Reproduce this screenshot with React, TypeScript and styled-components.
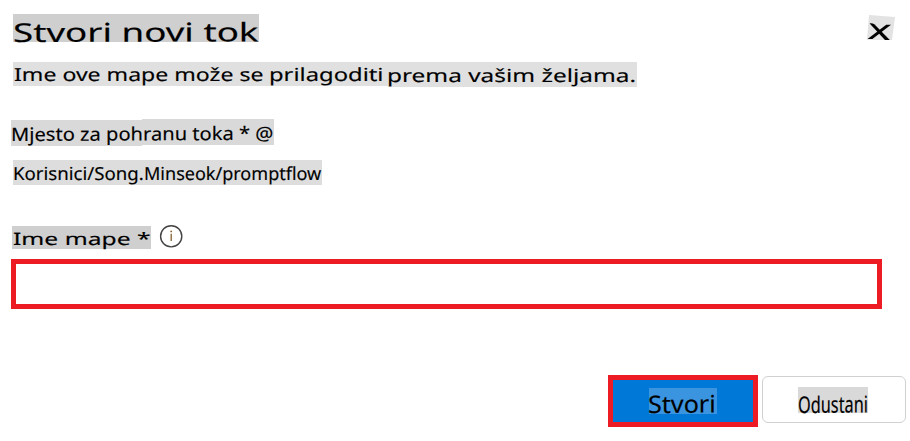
import React, { useLayoutEffect, useRef, useState } from "react";
import styled, { createGlobalStyle } from "styled-components";

const GlobalStyle = createGlobalStyle`
  * { box-sizing: border-box; }
  html, body { margin: 0; padding: 0; background: #fff; }
  body { font-family: "Noto Sans", "Open Sans", sans-serif; color: #000; overflow: hidden; }
`;

const Dialog = styled.main`
  width: 910px;
  height: 441px;
  display: flex;
  flex-direction: column;
  background: #fff;
`;

const Header = styled.header`
  display: flex;
  justify-content: space-between;
  align-items: flex-start;
  height: 62px;
  padding: 14px 15px 0 13px;
`;

const Title = styled.h1`
  margin: 0;
  font-weight: 400;
`;

const CloseButton = styled.button`
  display: block;
  width: 28px;
  height: 26px;
  padding: 0;
  border: 0;
  background: none;
  margin-top: 1px;
`;

const Line = styled.div<{ $left: number; $height: number }>`
  display: flex;
  align-items: flex-start;
  height: ${(p) => p.$height}px;
  padding-left: ${(p) => p.$left}px;
`;

const InfoIcon = styled.svg`
  display: block;
  margin: -2px 0 0 8px;
`;

const NameInput = styled.input`
  display: block;
  width: 871px;
  height: 50px;
  margin-left: 11px;
  border: 5px solid #ed1c24;
  border-radius: 0;
  background: #fff;
  outline: none;
`;

const Footer = styled.footer`
  display: flex;
  justify-content: flex-end;
  gap: 4px;
  margin-top: 66px;
  padding-right: 4px;
`;

const CreateButton = styled.button`
  display: flex;
  width: 150px;
  height: 52px;
  padding: 8px 0 0 36px;
  border: 5px solid #ed1c24;
  border-radius: 0;
  background: #0078d7;
  color: #000;
`;

const CancelButton = styled.button`
  display: flex;
  width: 144px;
  height: 47px;
  margin-top: 1px;
  padding: 10px 0 0 35px;
  border: 1px solid #d0d0d0;
  border-radius: 6px;
  background: #fff;
  color: #000;
`;

type MarkProps = { $w: number; $h: number; $bg: string };

const Mark = styled.span<MarkProps>`
  display: block;
  flex: none;
  width: ${(p) => p.$w}px;
  height: ${(p) => p.$h}px;
  background: ${(p) => p.$bg};
  text-align: left;
`;

const Glyphs = styled.span<{ $size: number; $base: number; $inset: number }>`
  display: block;
  width: max-content;
  margin-left: ${(p) => p.$inset}px;
  font-family: "Noto Sans", "Open Sans", sans-serif;
  font-weight: 400;
  font-size: ${(p) => p.$size}px;
  line-height: ${(p) => 2 * (p.$base - 0.388 * p.$size)}px;
  white-space: nowrap;
  text-rendering: geometricPrecision;
  -webkit-text-stroke: 0.15px #000;
  transform-origin: 0 ${(p) => p.$base}px;
`;

type LabelProps = {
  text: string;
  width: number;
  height: number;
  color: string;
  size: number;
  base: number;
  inset?: number;
  end?: number;
  tilt?: number;
};

/* Highlighted label whose text is stretched to fill its highlight. */
function Label({ text, width, height, color, size, base, inset = 0, end = 0, tilt = 0 }: LabelProps) {
  const ref = useRef<HTMLSpanElement>(null);
  const [scale, setScale] = useState(1);
  useLayoutEffect(() => {
    const el = ref.current;
    if (!el) return;
    const natural = parseFloat(getComputedStyle(el).width);
    if (natural > 0) setScale((width - inset - end) / natural);
  }, [text, width, inset, end, size]);
  return (
    <Mark $w={width} $h={height} $bg={color}>
      <Glyphs
        ref={ref}
        $size={size}
        $base={base}
        $inset={inset}
        style={{ transform: `skewY(${tilt}deg) scaleX(${scale})` }}
      >
        {text}
      </Glyphs>
    </Mark>
  );
}

export default function App() {
  return (
    <>
      <GlobalStyle />
      <Dialog>
        <Header>
          <Title>
            <Label text="Stvori novi tok" width={246} height={28} color="#cfcfcf" size={26} base={28.3} end={0.5} tilt={-0.15} />
          </Title>
          <CloseButton aria-label="Zatvori">
            <svg width="28" height="26" viewBox="0 0 28 26">
              <path d="M2 0 L28 2 L25 25 H0 Z" fill="#e3e3e3" />
              <path d="M2.6 8.2 Q5.5 7.8 7.6 9.6 L22.8 25 H18 L3.8 9.8 Z" fill="#000" />
              <path d="M19.2 9.8 H24 L5.4 24 H0.6 Z" fill="#000" />
            </svg>
          </CloseButton>
        </Header>
        <Line $left={13} $height={57}>
          <Label text="Ime ove mape može se" width={256} height={24} color="#e0e0e0" size={18} base={20} inset={0.5} end={6} />
          <Label text="prilagoditi" width={119} height={24} color="#e0e0e0" size={18} base={20.5} inset={-0.5} end={5} />
          <Label text="prema vašim željama." width={249} height={25} color="#e0e0e0" size={18} base={21} inset={-1} end={1} />
        </Line>
        <Line $left={11} $height={41}>
          <Label
            text="Mjesto za pohranu toka * @"
            width={263}
            height={27}
            color="linear-gradient(#d9d9d9, #d9d9d9) 0 1px / 131px 26px no-repeat, linear-gradient(#d9d9d9, #d9d9d9) 131px 0 / 132px 26px no-repeat"
            size={18.5}
            base={23}
            inset={0.3}
            end={0.3}
            tilt={-0.25}
          />
        </Line>
        <Line $left={13} $height={66}>
          <Label text="Korisnici/Song." width={131} height={25} color="#dddddd" size={18} base={21.2} end={0.2} />
          <Label text="Minseok/promptflow" width={178} height={25} color="#dddddd" size={18} base={21.2} end={0.7} />
        </Line>
        <Line $left={12} $height={33}>
          <Label text="Ime mape *" width={139} height={23} color="#cfcfcf" size={17} base={19.7} inset={0.5} end={1} />
          <InfoIcon width="24" height="24" viewBox="0 0 24 24">
            <circle cx="12.2" cy="12.3" r="10.6" fill="none" stroke="#444" strokeWidth="1.4" />
            <path d="M12.2 9.8V17" stroke="#84602f" strokeWidth="1.3" />
            <circle cx="12.2" cy="7.4" r="0.9" fill="#84602f" />
          </InfoIcon>
        </Line>
        <NameInput aria-label="Ime mape" />
        <Footer>
          <CreateButton>
            <Label text="Stvori" width={68} height={26} color="#3a94df" size={24} base={26} inset={-0.7} end={1} tilt={-0.5} />
          </CreateButton>
          <CancelButton>
            <Label text="Odustani" width={70} height={26} color="#d9d9d9" size={23} base={26.5} inset={-0.5} end={0.5} tilt={-0.5} />
          </CancelButton>
        </Footer>
      </Dialog>
    </>
  );
}
